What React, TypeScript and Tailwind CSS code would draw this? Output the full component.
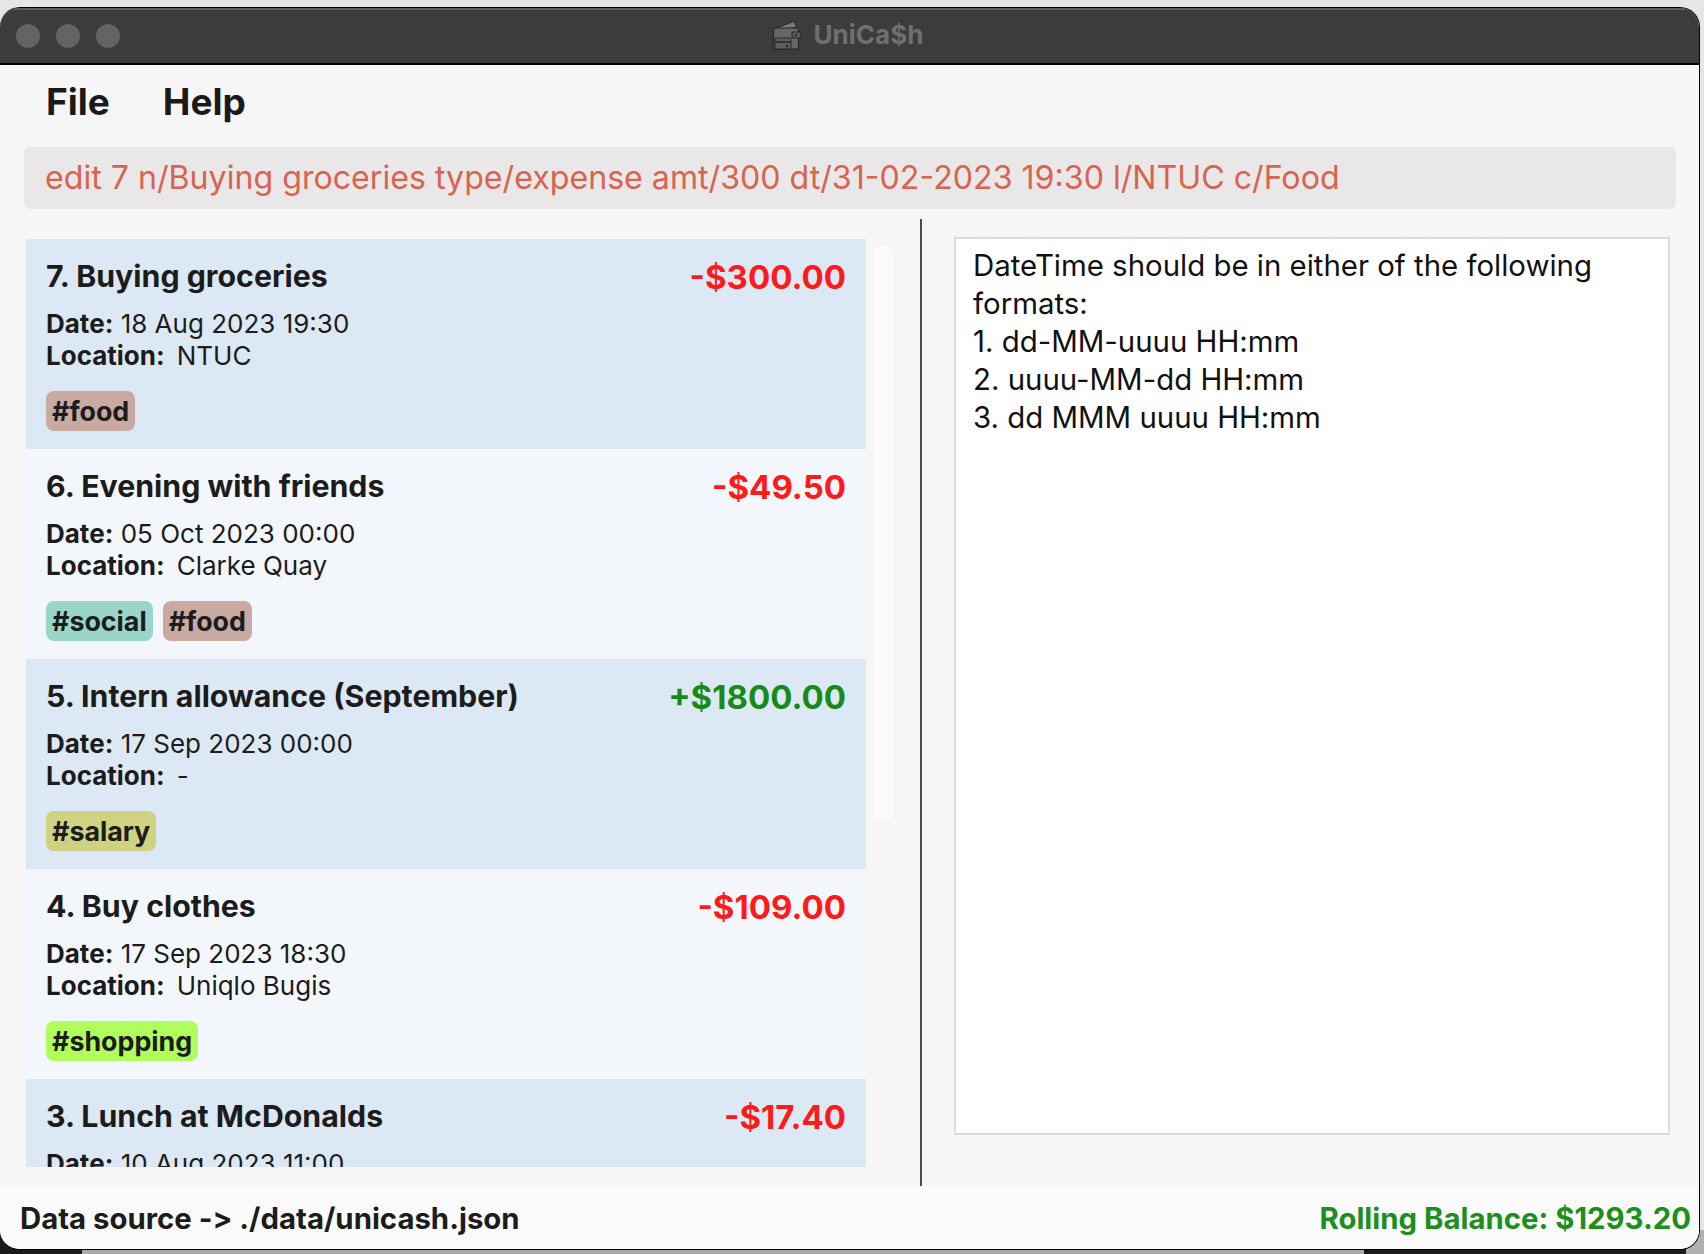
const transactions = [
  {
    title: "7. Buying groceries",
    amount: "-$300.00",
    income: false,
    date: "18 Aug 2023 19:30",
    location: "NTUC",
    tags: [{ name: "#food", color: "bg-[#c8aaa3]" }],
  },
  {
    title: "6. Evening with friends",
    amount: "-$49.50",
    income: false,
    date: "05 Oct 2023 00:00",
    location: "Clarke Quay",
    tags: [
      { name: "#social", color: "bg-[#9ad6c8]" },
      { name: "#food", color: "bg-[#c8aaa3]" },
    ],
  },
  {
    title: "5. Intern allowance (September)",
    amount: "+$1800.00",
    income: true,
    date: "17 Sep 2023 00:00",
    location: "-",
    tags: [{ name: "#salary", color: "bg-[#cfd381]" }],
  },
  {
    title: "4. Buy clothes",
    amount: "-$109.00",
    income: false,
    date: "17 Sep 2023 18:30",
    location: "Uniqlo Bugis",
    tags: [{ name: "#shopping", color: "bg-[#b0fe5c]" }],
  },
  {
    title: "3. Lunch at McDonalds",
    amount: "-$17.40",
    income: false,
    date: "10 Aug 2023 11:00",
    location: "McDonalds",
    tags: [{ name: "#food", color: "bg-[#c8aaa3]" }],
  },
];

const WalletIcon = () => (
  <svg width="32" height="32" viewBox="0 0 32 32" className="shrink-0">
    <path d="M5 9 L22 2 L25 8 L8 12 Z" fill="#6a6a6a" stroke="#262626" strokeWidth="1" />
    <path d="M8 9 L22 5 M9 11 L23 7" stroke="#8a8a8a" strokeWidth="1" />
    <rect x="1.5" y="9" width="25" height="21" rx="2" fill="#666666" stroke="#262626" strokeWidth="1.2" />
    <rect x="20" y="13" width="9" height="6" rx="1" fill="#5a5a5a" stroke="#262626" strokeWidth="1.2" />
    <circle cx="24" cy="16" r="1" fill="#222222" />
    <rect x="3" y="19" width="16" height="11" rx="1" fill="#5e5e5e" stroke="#262626" strokeWidth="1" />
    <path d="M3 23 H19" stroke="#262626" strokeWidth="1.4" />
    <circle cx="15" cy="27" r="1.2" fill="#222222" />
  </svg>
);

const TitleBar = () => (
  <div className="relative flex h-[57px] shrink-0 items-center justify-center border-b-2 border-b-black border-t-2 border-t-[#5c5c5c] bg-[#3c3c3c] pb-[3px]">
    <div className="absolute left-[16px] top-[14px] flex gap-[16px]">
      <div className="h-[24px] w-[24px] rounded-full bg-[#646464]" />
      <div className="h-[24px] w-[24px] rounded-full bg-[#646464]" />
      <div className="h-[24px] w-[24px] rounded-full bg-[#646464]" />
    </div>
    <div className="flex items-center gap-[10px] pr-[4px]">
      <WalletIcon />
      <span className="text-[26px] font-bold leading-none text-[#6f6f6f]">UniCa$h</span>
    </div>
  </div>
);

const TransactionCard = ({ item, index }: { item: (typeof transactions)[number]; index: number }) => (
  <div className={`h-[210px] shrink-0 px-[20px] pt-[18px] ${index % 2 === 0 ? "bg-[#dce9f5]" : "bg-[#f3f7fc]"}`}>
    <div className="flex h-[38px] items-center justify-between">
      <span className="text-[30.3px] font-bold leading-none text-[#1c1c1c]">{item.title}</span>
      <span className={`mt-[2px] text-[33px] font-bold leading-none ${item.income ? "text-[#178a17]" : "text-[#ff1a1a]"}`}>
        {item.amount}
      </span>
    </div>
    <div className="mt-[13px] text-[26px] leading-[32px] text-[#1c1c1c]">
      <div>
        <span className="font-bold">Date:</span> {item.date}
      </div>
      <div>
        <span className="font-bold">Location:</span>
        <span className="ml-[12px]">{item.location}</span>
      </div>
    </div>
    <div className="mt-[19px] flex gap-[10px]">
      {item.tags.map((tag) => (
        <div
          key={tag.name}
          className={`flex h-[40px] items-center rounded-[8px] px-[6px] text-[26.8px] font-bold leading-none text-[#1c1c1c] ${tag.color}`}
        >
          {tag.name}
        </div>
      ))}
    </div>
  </div>
);

export default function App() {
  return (
    <div className="flex h-[1254px] w-[1704px] flex-col overflow-hidden bg-[#e5e7e6] pt-[7px] font-['Inter',sans-serif]">
      <div className="relative z-10 mr-[4px] flex h-[1243px] shrink-0 flex-col overflow-hidden rounded-[20px] border border-l-0 border-black bg-[#f6f6f6]">
        <TitleBar />

        <div className="mb-[10px] flex h-[72px] shrink-0 items-center gap-[53px] px-[46px] text-[37px] font-bold leading-none text-[#1a1a1a]">
          <span>File</span>
          <span>Help</span>
        </div>

        <div className="ml-[24px] mr-[23px] flex h-[62px] shrink-0 items-center rounded-[6px] bg-[#e9e7e7] px-[21px] text-[32.15px] leading-none text-[#d9634f]">
          edit 7 n/Buying groceries type/expense amt/300 dt/31-02-2023 19:30 l/NTUC c/Food
        </div>

        <div className="mt-[10px] flex min-h-0 flex-1">
          <div className="flex w-[920px] shrink-0 pl-[26px] pt-[20px]">
            <div className="flex h-[928px] w-[840px] shrink-0 flex-col overflow-hidden">
              {transactions.map((item, index) => (
                <TransactionCard key={item.title} item={item} index={index} />
              ))}
            </div>
            <div className="ml-[7px] mt-[8px] h-[572px] w-[20px] rounded-[6px] bg-[#fbfbfb]" />
          </div>

          <div className="w-[2px] shrink-0 bg-[#4a4a4a]" />

          <div className="flex-1 pl-[32px] pr-[29px] pt-[18px]">
            <div className="h-[898px] border-2 border-[#dcdcdc] bg-white px-[17px] pt-[8px] text-[29.4px] leading-[38px] text-[#111111]">
              <div>DateTime should be in either of the following formats:</div>
              <div>1. dd-MM-uuuu HH:mm</div>
              <div>2. uuuu-MM-dd HH:mm</div>
              <div>3. dd MMM uuuu HH:mm</div>
            </div>
          </div>
        </div>

        <div className="flex h-[63px] shrink-0 items-center justify-between bg-[#fafafa] pl-[20px] pr-[8px] pt-[3px] text-[29.35px] font-bold leading-none [font-variant-ligatures:no-contextual]">
          <span className="text-[#1c1c1c]">Data source -&gt; ./data/unicash.json</span>
          <span className="text-[#1c8f1c]">Rolling Balance: $1293.20</span>
        </div>
      </div>

      <div className="-mt-[20px] flex h-[24px] shrink-0">
        <div className="w-[82px] bg-[#1a1a1a]" />
        <div className="w-[1282px] bg-[#a8a8a8]" />
        <div className="w-[322px] bg-[#1a1a1a]" />
        <div className="flex-1 bg-[#b0b0b0]" />
      </div>
    </div>
  );
}
